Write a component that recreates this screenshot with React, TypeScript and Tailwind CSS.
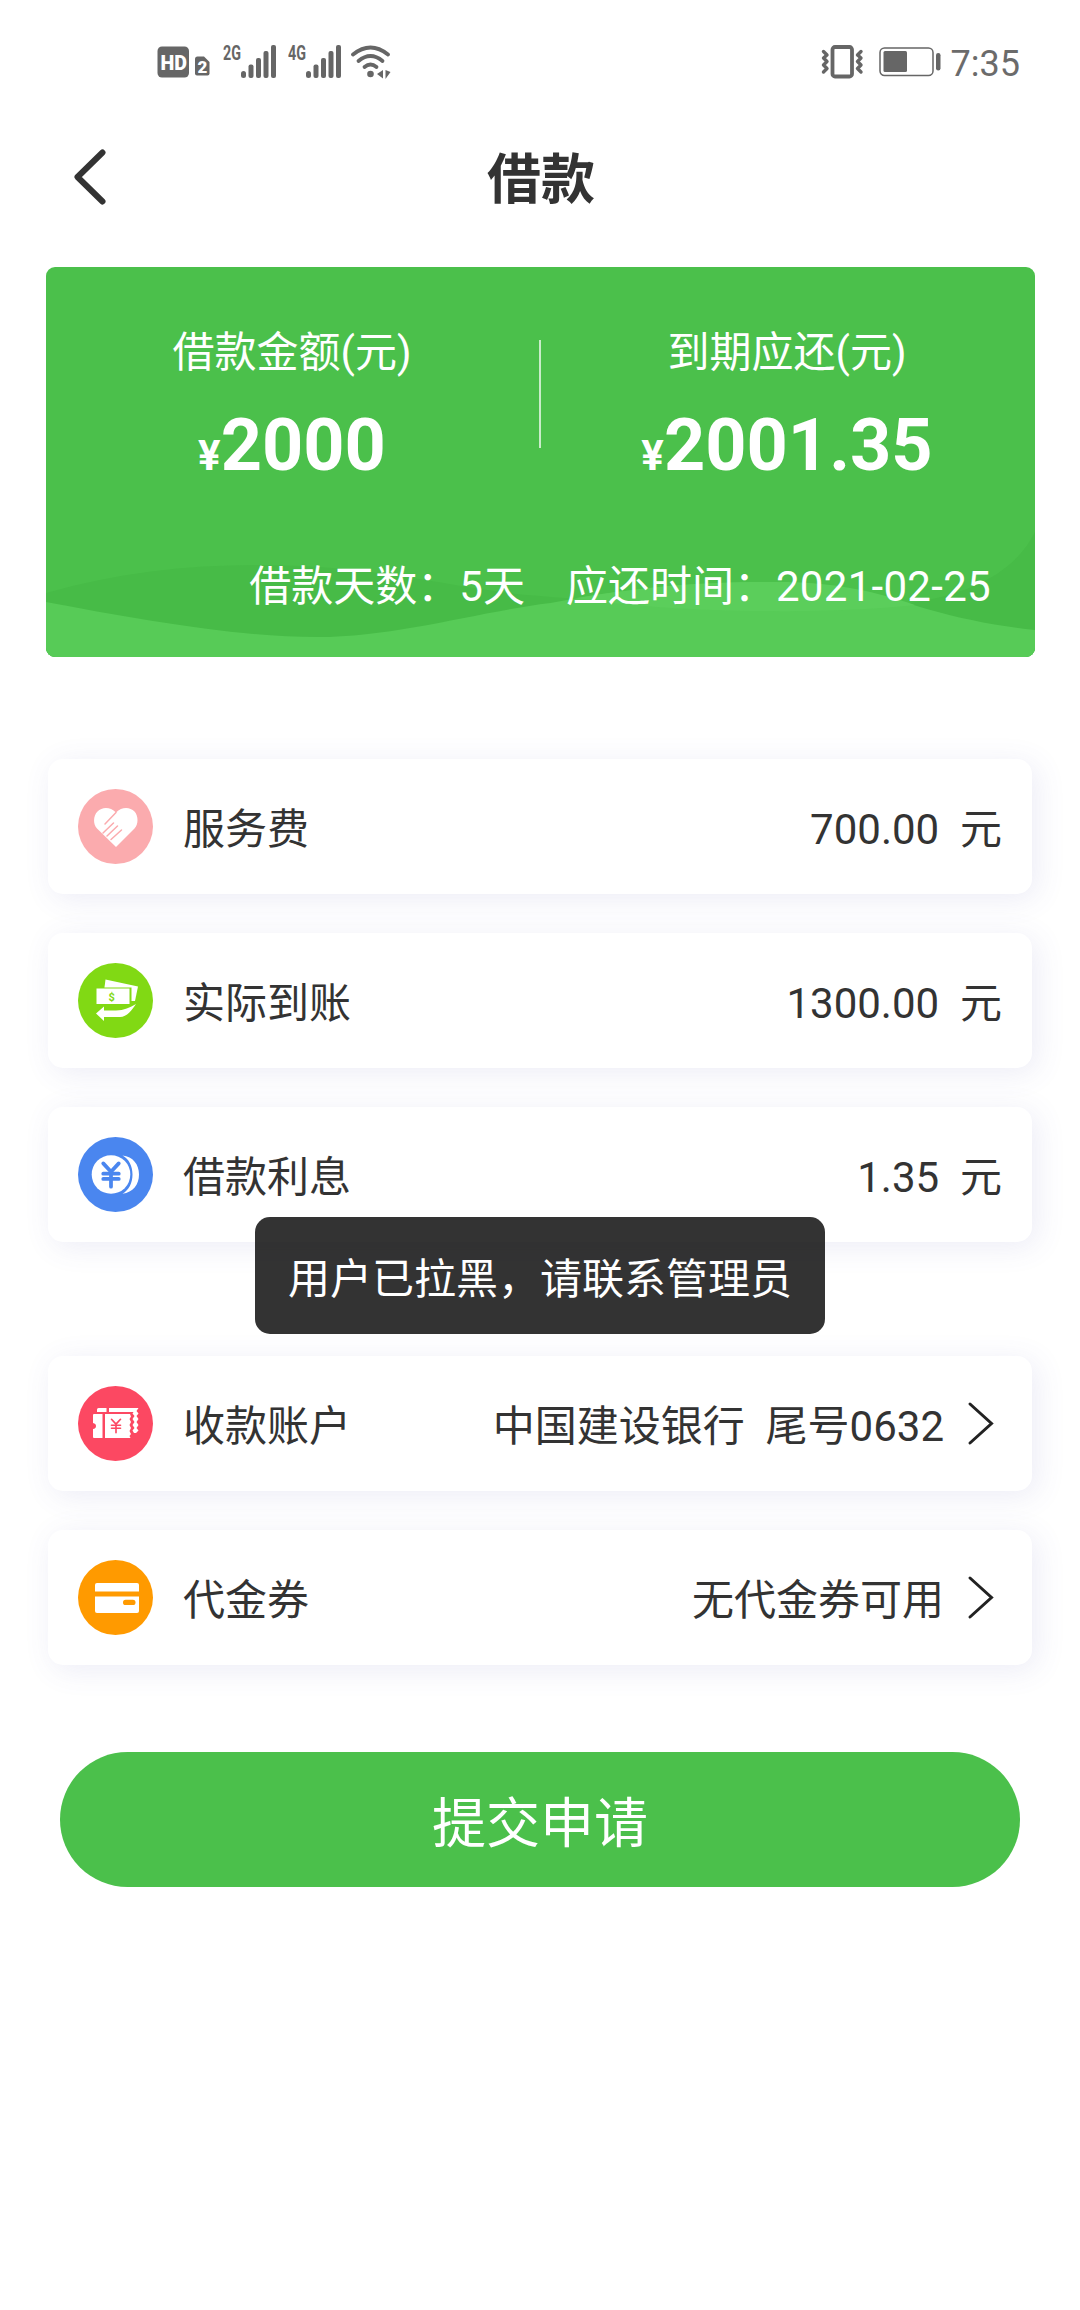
import { ReactNode } from 'react';
import { JapaneseYen } from 'lucide-react';

const SignalIcon = ({ label }: { label: string }) => (
    <svg className="w-[54px] h-[42px] -mt-[6px]" viewBox="0 -6 54 42" fill="#666666">
        <text x="0" y="15.8" fontSize="20.5" fontWeight="700" textLength="18" lengthAdjust="spacingAndGlyphs">
            {label}
        </text>
        <rect x="18" y="27" width="5" height="7" rx="2.5" />
        <rect x="25.5" y="20.5" width="5" height="13.5" rx="2" />
        <rect x="33" y="14" width="5" height="20" rx="2" />
        <rect x="40.5" y="7" width="5" height="27" rx="2" />
        <rect x="48" y="1" width="5" height="33" rx="2" />
    </svg>
);

const StatusBar = () => (
    <div className="w-full h-[84px] pt-[44px] pl-[157px] pr-[60px] flex items-start justify-between">
        <div className="flex items-start">
            <svg className="w-[53px] h-[36px] mr-[13px]" viewBox="0 0 53 36">
                <rect x="0.5" y="2.5" width="31.5" height="31" rx="4.5" fill="#666666" />
                <text
                    x="3.5"
                    y="25.5"
                    fontSize="21"
                    fontWeight="900"
                    fill="#fff"
                    textLength="26.5"
                    lengthAdjust="spacingAndGlyphs"
                >
                    HD
                </text>
                <path d="M40.500 12.500H47L52.500 18V29.500Q52.500 31.500 50.500 31.500H40Q38 31.500 38 29.500V15Q38 12.500 40.500 12.500Z" fill="#666666" />
                <text x="40.5" y="28.5" fontSize="17" fontWeight="900" fill="#fff">
                    2
                </text>
            </svg>
            <SignalIcon label="2G" />
            <div className="w-[11px]" />
            <SignalIcon label="4G" />
            <svg
                className="w-[42px] h-[36px] ml-[8px]"
                viewBox="0 0 42 36"
                fill="none"
                stroke="#666666"
                strokeWidth="3.8"
                strokeLinecap="round"
            >
                <path d="M3 10.500Q20.500 -3.500 38 10.500" />
                <path d="M8.500 17Q20.500 7 32.500 17" />
                <path d="M14.500 23Q20.500 18 26.500 23" />
                <circle cx="20.500" cy="30" r="3.300" fill="#666666" stroke="none" />
                <path d="M33 26V34.500L27 30ZM35.500 26L40.500 28L35.500 35Z" fill="#666666" stroke="none" />
            </svg>
        </div>
        <div className="flex items-start">
            <svg
                className="w-[46px] h-[36px]"
                viewBox="0 0 46 36"
                fill="none"
                stroke="#666666"
                strokeWidth="3.4"
                strokeLinejoin="round"
                strokeLinecap="round"
            >
                <rect x="12.500" y="3" width="19.500" height="29.500" rx="2.500" strokeWidth="3.800" />
                <path d="M3.500 7.500L7 11L3.500 14L7 17.500L3.500 21L7 24.500L3.500 28" />
                <path d="M41 7.500L37.500 11L41 14L37.500 17.500L41 21L37.500 24.500L41 28" />
            </svg>
            <svg className="w-[64px] h-[36px] ml-[13px]" viewBox="0 0 64 36">
                <rect x="1" y="4" width="53" height="27.500" rx="4.500" fill="none" stroke="#666666" strokeWidth="1.500" />
                <rect x="4.500" y="7" width="23.500" height="21" rx="1.500" fill="#666666" />
                <rect x="57" y="9" width="4.500" height="17.500" rx="2.200" fill="#666666" />
            </svg>
            <span className="pl-[8px] text-[36px] leading-[40px] text-[#6b6b6b]">7:35</span>
        </div>
    </div>
);

const CardWaves = () => (
    <svg className="absolute inset-0 w-full h-full" viewBox="0 0 988 390" preserveAspectRatio="none">
        <path
            d="M0 326C70 306 140 298 210 298C330 298 400 320 480 328C560 334 640 342 740 342C840 342 950 340 988 265V390H0Z"
            fill="#47bb47"
        />
        <path
            d="M0 335C90 352 190 370 271 370C350 370 430 345 504 336C600 318 660 315 730 315C800 315 850 333 880 342C915 352 950 359 988 363V390H0Z"
            fill="#57cb57"
        />
        <path d="M530 331C610 318 660 315 730 315C790 315 830 325 868 338C780 348 620 346 530 331Z" fill="#5bce5b" />
    </svg>
);

const Amount = ({ label, value }: { label: string; value: string }) => (
    <div className="flex-1 flex flex-col items-center">
        <p className="text-[42px] leading-[60px]">{label}</p>
        <p className="mt-[21px] h-[84px] text-[72px] leading-[84px] font-bold">
            <span className="text-[42px]">¥</span>
            {value}
        </p>
    </div>
);

const LoanCard = () => (
    <div className="relative ml-[46px] w-[989px] h-[390px] rounded-[9px] overflow-hidden bg-[#4bc04b] text-white">
        <CardWaves />
        <div className="relative pt-[56px]">
            <div className="flex pr-[2px]">
                <Amount label="借款金额(元)" value="2000" />
                <div className="w-[2px] h-[108px] mt-[17px] ml-px bg-white/70" />
                <Amount label="到期应还(元)" value="2001.35" />
            </div>
            <div className="mt-[69px] pr-[44px] flex justify-end gap-[41px] text-[42px] leading-[60px]">
                <p>借款天数：5天</p>
                <p>
                    应还时间：<span className="tracking-[0.3px]">2021-02-25</span>
                </p>
            </div>
        </div>
    </div>
);

const RoundIcon = ({ color, children }: { color: string; children: ReactNode }) => (
    <svg className="w-[75px] h-[75px] shrink-0" viewBox="0 0 75 75">
        <circle cx="37.5" cy="37.5" r="37.5" fill={color} />
        {children}
    </svg>
);

const FeeIcon = () => (
    <RoundIcon color="#fbabae">
        <path
            d="M38 58L19 39.500C15 35.500 15 27 19.500 22.500C24 18 32 17.500 38 23.500C44 17.500 52 18 56.500 22.500C60.500 27 60.500 35.500 56.500 39.500Z"
            fill="#fff"
        />
        <path
            d="M27 35L38 23.500M25 44L35.500 34M29 47L39.500 37M33 50.500L43.500 41"
            stroke="#fbabae"
            strokeWidth="1.5"
            strokeLinecap="round"
        />
    </RoundIcon>
);

const ReceivedIcon = () => (
    <RoundIcon color="#81d914">
        <path d="M27.500 16.500L60 23.500L57 38H50L26 28Z" fill="#fff" />
        <rect x="17.500" y="24.500" width="36" height="17.500" fill="#81d914" />
        <rect x="18.500" y="25.500" width="33" height="15.500" fill="#fff" />
        <text x="33.700" y="37.500" fontSize="11" fontWeight="700" fill="#81d914" textAnchor="middle">
            $
        </text>
        <path d="M18 50.500L26 43.500V47.500H38C46 47.500 52 44.500 58 41C54 47 49 54 42 54H26V58Z" fill="#fff" />
    </RoundIcon>
);

const InterestIcon = () => (
    <RoundIcon color="#4a86ef">
        <circle cx="33" cy="37.500" r="19.300" fill="#fff" />
        <path d="M44.500 18.500C55 19.500 61 27.500 61 37.500C61 47.500 55 55.500 44.500 56.700C51 53 54.500 46 54.500 37.500C54.500 29 51 22 44.500 18.500Z" fill="#fff" />
        <JapaneseYen x="17.5" y="22.500" width="31" height="31" strokeWidth={2.9} color="#4a86ef" />
    </RoundIcon>
);

const AccountIcon = () => (
    <RoundIcon color="#fc4862">
        <path d="M20.500 22H28.500V26H19V23.500Q19 22 20.500 22ZM31 22H60.500L58.500 25L60.500 27.500L58.500 30L60.500 33L58.500 36L60.500 39L58.500 42L60.500 44.500L58 47H56L54.500 44.500L56.500 42L54.500 39L56.500 36L54.500 33L56.500 30L54.500 27.500L55.500 26H31Z" fill="#fff" />
        <path d="M16 28H24.500V52H16Q15 52 15 51V43Q18 42.500 18 40Q18 37.500 15 37V29Q15 28 16 28Z" fill="#fff" />
        <path d="M27 28H52L53 30.500L51.500 33L53 36L51.500 39L53 42L51.500 45L53 48L51.500 50L52.500 52H27Z" fill="#fff" />
        <JapaneseYen x="29" y="31" width="18" height="18" strokeWidth={2.2} color="#fc4862" />
    </RoundIcon>
);

const CouponIcon = () => (
    <RoundIcon color="#ff9a00">
        <path d="M19 23H59Q61 23 61 25V31.500H17V25Q17 23 19 23Z" fill="#fff" />
        <path d="M17 36.500H61V51Q61 53 59 53H19Q17 53 17 51Z" fill="#fff" />
        <rect x="45" y="39.800" width="12.500" height="5.200" rx="2.600" fill="#ff9a00" />
    </RoundIcon>
);

interface RowProps {
    icon: ReactNode;
    label: string;
    children: ReactNode;
    arrow?: boolean;
}

const Row = ({ icon, label, children, arrow }: RowProps) => (
    <div className="relative h-[135px] pl-[30px] pr-[30px] flex items-center rounded-[15px] bg-white shadow-[5px_5px_30px_rgba(80,80,170,0.11)] text-[42px] leading-[60px] text-[#333333]">
        {icon}
        <p className="ml-[30px] pt-[6px]">{label}</p>
        <p className="ml-auto pt-[6px] whitespace-pre">{children}</p>
        {arrow && (
            <svg
                className="w-[28px] h-[46px] ml-[23px] mr-[7px]"
                viewBox="0 0 28 46"
                fill="none"
                stroke="#222222"
                strokeWidth="3"
                strokeLinecap="round"
            >
                <path d="M3 3L24.500 22.500L3 42" />
            </svg>
        )}
    </div>
);

const fees = [
    { icon: <FeeIcon />, label: '服务费', value: '700.00' },
    { icon: <ReceivedIcon />, label: '实际到账', value: '1300.00' },
    { icon: <InterestIcon />, label: '借款利息', value: '1.35' }
];

const App = () => {
    return (
        <div className="relative w-[1080px] h-[2310px] overflow-hidden bg-white font-['Roboto','Noto_Sans_CJK_SC',sans-serif]">
            <StatusBar />
            <div className="h-[183px] pl-[71px] pr-[69px] grid grid-cols-[36px_1fr_36px] items-center">
                <svg
                    className="w-[36px] h-[58px]"
                    viewBox="0 1 36 58"
                    fill="none"
                    stroke="#333333"
                    strokeWidth="6"
                    strokeLinecap="round"
                    strokeLinejoin="round"
                >
                    <path d="M31.500 6.500L6.500 31L31.500 55.500" />
                </svg>
                <h1 className="pt-[11px] text-center text-[54px] leading-[72px] font-bold text-[#333333]">借款</h1>
            </div>
            <LoanCard />
            <div className="mt-[102px] px-[48px] flex flex-col gap-[39px]">
                {fees.map((item) => (
                    <Row key={item.label} icon={item.icon} label={item.label}>
                        {`${item.value}  元`}
                    </Row>
                ))}
            </div>
            <div className="mt-[114px] px-[48px] flex flex-col gap-[39px]">
                <Row icon={<AccountIcon />} label="收款账户" arrow>
                    {'中国建设银行  尾号0632'}
                </Row>
                <Row icon={<CouponIcon />} label="代金券" arrow>
                    无代金券可用
                </Row>
            </div>
            <button className="mt-[87px] mx-[60px] w-[960px] h-[135px] pt-[11px] rounded-full bg-[#4bc04b] text-white text-[54px] leading-[72px]">
                提交申请
            </button>
            <div className="absolute top-[1217px] left-[255px] w-[570px] h-[117px] pt-[8px] flex items-center justify-center rounded-[15px] bg-black/80 text-white text-[42px] leading-[60px]">
                用户已拉黑，请联系管理员
            </div>
        </div>
    );
};

export default App;
